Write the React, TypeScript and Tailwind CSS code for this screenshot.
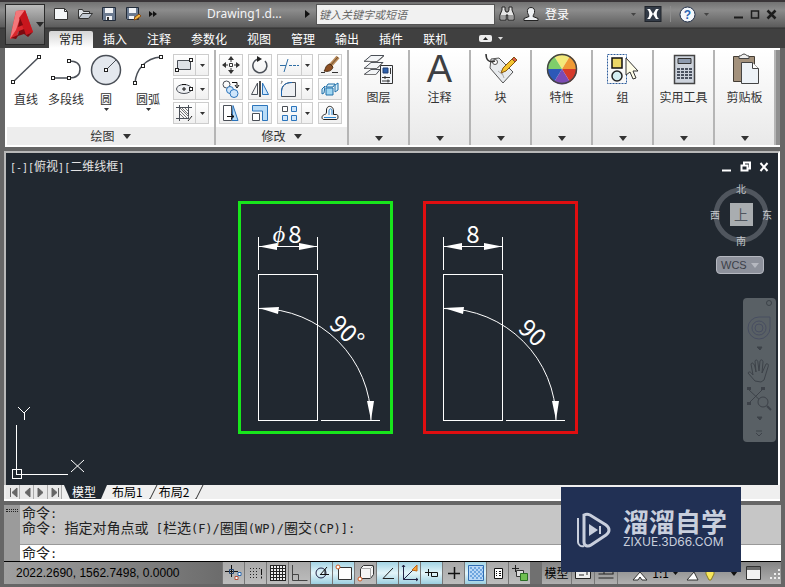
// src/App.tsx
import { Fragment, type ReactNode } from "react";

type IconProps = { w?: number; h?: number; children: ReactNode };

function Icon({ w = 20, h = 20, children }: IconProps) {
  return (
    <svg
      width={w}
      height={h}
      viewBox={`0 0 ${w} ${h}`}
      fill="none"
      stroke="#4a4f57"
      className="shrink-0"
      aria-hidden="true"
    >
      {children}
    </svg>
  );
}

function Caret({ big = false, color = "#333" }: { big?: boolean; color?: string }) {
  return big ? (
    <svg width="8" height="5" viewBox="0 0 8 5" className="shrink-0" aria-hidden="true">
      <path d="M0 0h8L4 5z" fill={color} />
    </svg>
  ) : (
    <svg width="5" height="3" viewBox="0 0 5 3" className="shrink-0" aria-hidden="true">
      <path d="M0 0h5L2.5 3z" fill={color} />
    </svg>
  );
}

// Chinese keeps the surrounding size, ASCII runs get a half-width font
function MixedText({ text, latin }: { text: string; latin: string }) {
  return (
    <>
      {text.split(/([ -~]+)/).map((part, i) =>
        i % 2 ? (
          <span key={i} className={latin}>
            {part}
          </span>
        ) : (
          <Fragment key={i}>{part}</Fragment>
        ),
      )}
    </>
  );
}

// square grip used on the ends of the draw icons
function Grip({ x, y }: { x: number; y: number }) {
  return <rect x={x - 1.5} y={y - 1.5} width="3" height="3" fill="#fff" stroke="#222" />;
}

// ── Title bar ───────────────────────────────────────────────────────────────
const quickTools = [
  {
    name: "New",
    icon: (
      <Icon w={16} h={14}>
        <path d="M1.5 1.5h10l3 3v8h-13z" fill="#f4f6f8" stroke="#333" />
        <path d="M11.5 1.5v3h3" stroke="#333" />
      </Icon>
    ),
  },
  {
    name: "Open",
    icon: (
      <Icon w={16} h={14}>
        <path d="M1.5 11.5v-9h4l1 2h6v2" fill="#dfe3e8" stroke="#333" />
        <path d="M1.5 11.5l4-5h10l-4 5z" fill="#c3cad3" stroke="#333" />
      </Icon>
    ),
  },
  {
    name: "Save",
    icon: (
      <Icon w={16} h={14}>
        <path d="M1.5.5h13v13h-12l-1-1z" fill="#6b7a90" stroke="#222b38" />
        <path d="M4 1h8v5H4zM5 9h6v4H5z" fill="#f2f4f7" stroke="none" />
        <path d="M6 10h2v3H6z" fill="#333" stroke="none" />
      </Icon>
    ),
  },
  {
    name: "Save as",
    icon: (
      <Icon w={16} h={14}>
        <path d="M1.5.5h12v12h-11l-1-1z" fill="#6b7a90" stroke="#222b38" />
        <path d="M4 1h7v5H4zM4 9h5v3H4z" fill="#f2f4f7" stroke="none" />
        <path d="M9 13l1-3 4-3 2 2-4 3z" fill="#f5b942" stroke="#8a4c12" />
      </Icon>
    ),
  },
];

function TitleBar() {
  return (
    <div className="flex h-7 items-center pl-1 text-[13px] text-gray-100">
      <div className="flex w-[154px] shrink-0 items-center gap-2">
        {quickTools.map((t) => (
          <button key={t.name} aria-label={t.name}>
            {t.icon}
          </button>
        ))}
        <button aria-label="More tools">
          <Icon w={8} h={6}>
            <path d="M0 0l4 3-4 3zM4 0l4 3-4 3z" fill="#111" stroke="none" />
          </Icon>
        </button>
      </div>
      <h1 className="w-[98px] shrink-0 whitespace-nowrap font-['Noto_Sans'] text-[12px]">
        Drawing1.d...
      </h1>
      <Icon w={5} h={8}>
        <path d="M0 0l5 4-5 4z" fill="#111" stroke="none" />
      </Icon>
      <input
        aria-label="搜索"
        placeholder="键入关键字或短语"
        className="ml-1.5 h-[21px] w-[179px] border border-[#555] bg-[#f1f1f1] px-0.5 text-[11px] italic text-black outline-none placeholder:text-[#666]"
      />
      <button aria-label="Find" className="ml-1">
        <Icon w={16} h={16}>
          <path d="M3 1h3v3l1 2h2l1-2V1h3v3l2 5v5H9V9H7v5H1V9l2-5z" fill="#e6e6e6" stroke="#222" />
          <path d="M3 9v4M5 9v4M11 9v4M13 9v4" stroke="#555" />
        </Icon>
      </button>
      <button className="ml-2 flex items-center gap-1.5 text-[12px] text-white">
        <Icon w={16} h={16}>
          <path
            d="M8 1.5c3 0 4 2 3.500 5-.5 2-1.500 3-1.500 4l5 2v2H1v-2l5-2c0-1-1-2-1.500-4C4 3.500 5 1.500 8 1.500z"
            fill="#eef0f3"
            stroke="#222"
          />
        </Icon>
        登录
      </button>
      <div className="ml-auto flex items-center pr-1">
        <Caret color="#444" />
        <button aria-label="Exchange" className="ml-2">
          <Icon w={18} h={16}>
            <rect x="1" y=".5" width="16" height="15" fill="#333b47" stroke="#20242b" />
            <path d="M3 3h3l3 5-3 5H3c3-2 3-8 0-10zM15 3h-3L9 8l3 5h3c-3-2-3-8 0-10z" fill="#fff" stroke="none" />
          </Icon>
        </button>
        <span className="mx-2 h-4 w-px bg-[#8d8d8d]" />
        <button aria-label="Help" className="flex items-center gap-2">
          <svg width="17" height="17" viewBox="0 0 17 17" aria-hidden="true">
            <circle cx="8.500" cy="8.500" r="7.500" fill="#f4f7fb" stroke="#25324a" />
            <text
              x="8.500"
              y="13"
              textAnchor="middle"
              className="fill-[#2864b4] font-['Liberation_Sans'] text-[12px] font-bold"
            >
              ?
            </text>
          </svg>
          <Caret color="#444" />
        </button>
        <div className="ml-6 flex items-center gap-1.5">
          <button aria-label="Minimize">
            <Icon w={11} h={11}>
              <path d="M1 8.500h9" stroke="#1d1d1d" strokeWidth="2" />
            </Icon>
          </button>
          <button aria-label="Maximize">
            <Icon w={10} h={11}>
              <path d="M1.500 2h7v7h-7z" stroke="#1d1d1d" strokeWidth="1.500" />
            </Icon>
          </button>
          <button aria-label="Close">
            <Icon w={11} h={11}>
              <path d="M1.500 1.500l8 8M9.500 1.500l-8 8" stroke="#1d1d1d" strokeWidth="2.500" />
            </Icon>
          </button>
        </div>
      </div>
    </div>
  );
}

const ribbonTabs = ["常用", "插入", "注释", "参数化", "视图", "管理", "输出", "插件", "联机"];

function Header() {
  return (
    <header className="flex border-t-2 border-[#3a3538] bg-[linear-gradient(#727272_0px,#8c8c8c_8px,#5c5c5c_25px,#303030_26px,#404040_27px)] px-1">
      <button
        aria-label="Application menu"
        className="mt-0.5 ml-px flex h-[41px] w-10 shrink-0 items-center gap-0.5 border border-[#2b2b2b] bg-linear-to-b from-[#bdbdbd] via-[#858585] to-[#606060] pl-0.5"
      >
        <Icon w={26} h={34}>
          <path d="M8 3l9-1 8 22-7 3-2-5-6 2-1 5-7 2z" fill="#d9262c" stroke="none" />
          <path d="M8 3l9-1-6 11-3 9-6 9z" fill="#f4777a" stroke="none" />
          <path d="M17 2l8 22-7 3-7-17z" fill="#c8161d" stroke="none" />
          <path d="M12 10l3 7-5 2z" fill="#7c0a10" stroke="none" />
          <path d="M3 30l7-3 1-4 5-2 2 6 7-3-5 5-4-3-6 2-2 3z" fill="#7c0a10" stroke="none" />
        </Icon>
        <Caret big color="#2b2b2b" />
      </button>
      <div className="flex min-w-0 flex-1 flex-col">
        <div className="-mt-0.5 pl-1">
          <TitleBar />
        </div>
        <nav className="flex h-5 items-end pl-1">
          {ribbonTabs.map((tab, i) => (
            <button
              key={tab}
              className={`px-2.5 pb-px text-[12px] leading-4 ${
                i === 0
                  ? "rounded-t-xs bg-linear-to-b from-[#d5d5d5] to-white text-[#222]"
                  : "text-white"
              }`}
            >
              {tab}
            </button>
          ))}
          <button aria-label="Minimize ribbon" className="mb-1.5 ml-5.5 flex items-center gap-1.5">
            <Icon w={13} h={7}>
              <rect width="13" height="7" rx="2" fill="#ececec" stroke="none" />
              <path d="M4 5h5L6.500 2z" fill="#222" stroke="none" />
            </Icon>
            <Caret color="#ddd" />
          </button>
        </nav>
      </div>
    </header>
  );
}

// ── Ribbon ──────────────────────────────────────────────────────────────────
const drawTools = [
  {
    name: "直线",
    width: "w-[38px]",
    caret: false,
    icon: (
      <Icon w={32} h={32}>
        <path d="M3 28L29 3" strokeWidth="1.500" />
        <Grip x={3} y={28} />
        <Grip x={29} y={3} />
      </Icon>
    ),
  },
  {
    name: "多段线",
    width: "w-[42px]",
    caret: false,
    icon: (
      <Icon w={32} h={32}>
        <path d="M3 24h16c6 0 11-2 11-9 0-6-4-8-11-8" strokeWidth="1.500" />
        <Grip x={3} y={24} />
        <Grip x={19} y={24} />
        <Grip x={19} y={7} />
      </Icon>
    ),
  },
  {
    name: "圆",
    width: "w-[38px]",
    caret: true,
    icon: (
      <Icon w={32} h={32}>
        <circle cx="16" cy="16" r="14.500" fill="#e4e8ee" strokeWidth="1.500" />
        <path d="M16 16L26 6" />
        <Grip x={16} y={16} />
      </Icon>
    ),
  },
  {
    name: "圆弧",
    width: "w-[46px]",
    caret: true,
    icon: (
      <Icon w={32} h={32}>
        <path d="M3 29C4 16 13 4 29 3" strokeWidth="1.500" />
        <Grip x={3} y={29} />
        <Grip x={11} y={12} />
        <Grip x={29} y={3} />
      </Icon>
    ),
  },
];

const shapeTools = [
  {
    name: "矩形",
    icon: (
      <Icon>
        <path d="M3.500 5.500h13v9h-13z" fill="#dde1e7" />
        <Grip x={3} y={15} />
        <Grip x={17} y={5} />
      </Icon>
    ),
  },
  {
    name: "椭圆",
    icon: (
      <Icon>
        <ellipse cx="10" cy="10" rx="7.500" ry="4.500" fill="#eef0f3" />
        <path d="M10 8v4M8 10h4" stroke="#111" />
        <Grip x={17} y={10} />
        <path d="M8 5.500h4" stroke="#111" />
      </Icon>
    ),
  },
  {
    name: "图案填充",
    icon: (
      <Icon>
        <path d="M5.500 2v16M14.500 2v14M2 4.500h16M2 15.500h13" />
        <path d="M6 8l7 7M6 11l4 4M8 5l6 6M11 5l3 3M6 5l9 9" stroke="#777" />
        <path d="M14 18l4-5" stroke="#222" />
      </Icon>
    ),
  },
];

type Tool = { name: string; icon: ReactNode; caret?: boolean };

const modifyRows: Tool[][] = [
  [
    {
      name: "移动",
      icon: (
        <Icon>
          <path d="M10 2v5M10 13v5M2 10h5M13 10h5" stroke="#333" />
          <path d="M10 1l3 4H7zM10 19l3-4H7zM1 10l4-3v6zM19 10l-4-3v6z" fill="#333" stroke="none" />
          <path d="M8.500 8.500h3v3h-3z" fill="#fff" stroke="#333" />
        </Icon>
      ),
    },
    {
      name: "旋转",
      icon: (
        <Icon>
          <path d="M8 4a7 7 0 1 0 7 2" strokeWidth="1.500" />
          <path d="M7 1l5 3-5 3z" fill="#222" stroke="none" />
        </Icon>
      ),
    },
    {
      name: "修剪",
      caret: true,
      icon: (
        <Icon w={22}>
          <path d="M2 10.500h6M10 4L6 17" stroke="#2f6ea5" />
          <path d="M11 10.500h10" stroke="#2f6ea5" strokeDasharray="3 1" />
        </Icon>
      ),
    },
    {
      name: "删除",
      icon: (
        <Icon>
          <path d="M18 2l-8 9" stroke="#b78857" strokeWidth="4" />
          <path d="M18 2l-8 9" stroke="#6e4a2a" strokeWidth="1" />
          <path d="M10 9l3 3c-1 4-5 5-9 4 2-2 1-6 6-7z" fill="#8d4f23" stroke="#4c2c12" />
          <path d="M1 17.500h4M12 17.500h6" stroke="#333" />
        </Icon>
      ),
    },
  ],
  [
    {
      name: "复制",
      icon: (
        <Icon>
          <circle cx="5.500" cy="5.500" r="3.500" />
          <circle cx="9" cy="11" r="3.500" fill="#cfe6fb" stroke="#2b74bb" />
          <circle cx="13" cy="14.500" r="4" fill="#cfe6fb" stroke="#2b74bb" />
          <path d="M11 3.500h5v4M14 6l2 3 2-3" stroke="#111" />
        </Icon>
      ),
    },
    {
      name: "镜像",
      icon: (
        <Icon>
          <path d="M7.500 4v11.500h-6z" />
          <path d="M12.500 4v11.500h6z" fill="#cfe6fb" stroke="#2b74bb" />
          <path d="M10 2v16" stroke="#111" strokeWidth="1.500" />
        </Icon>
      ),
    },
    {
      name: "圆角",
      caret: true,
      icon: (
        <Icon w={22}>
          <path d="M3.500 17.500V12C4 6 8 3.500 14 3.500h3.500v14z" fill="#eef0f3" />
          <path d="M3.500 17V12C4 6 8 3.500 14 3.500" stroke="#1f69b5" />
          <path d="M3 2l2 1M3 5l1-3" stroke="#999" />
        </Icon>
      ),
    },
    {
      name: "分解",
      icon: (
        <Icon>
          <path d="M6 9h7v7H6z" fill="#9fd6f2" stroke="#1f6fa8" />
          <path d="M8 5h7l-2 3H6zM15 6l3-2v7l-3 2zM5 7L2 10v5l2-1z" fill="#d9f0fb" stroke="#1f6fa8" />
        </Icon>
      ),
    },
  ],
  [
    {
      name: "拉伸",
      icon: (
        <Icon>
          <path d="M12 2.500l5 15h-6z" fill="#b9dcf7" stroke="#2b74bb" />
          <path d="M2.500 2.500h8v15h-8z" fill="#fff" />
          <path d="M6 13.500h7M10 11l3 2.500-3 2.500" stroke="#111" />
        </Icon>
      ),
    },
    {
      name: "缩放",
      icon: (
        <Icon>
          <path d="M2.500 2.500h15v15h-5V8h-10z" fill="#b9dcf7" stroke="#2b74bb" />
          <path d="M2.500 10.500h7v7h-7z" fill="#fff" />
        </Icon>
      ),
    },
    {
      name: "阵列",
      caret: true,
      icon: (
        <Icon w={22}>
          <path d="M4.500 3.500h5v5h-5z" fill="#fff" />
          <path
            d="M13.500 3.500h5v5h-5zM4.500 12.500h5v5h-5zM13.500 12.500h5v5h-5z"
            fill="#cfe6fb"
            stroke="#2b74bb"
          />
        </Icon>
      ),
    },
    {
      name: "偏移",
      icon: (
        <Icon>
          <path
            d="M3.500 16.500h13c2 0 2-5 0-5h-3V8c0-6-7-6-7-1v2c0 3-2 2-3 3-2 1-2 4 0 4.500z"
            stroke="#222"
          />
          <path d="M4 14.500h12M9 12V8c0-3 3-3 3 0v4" stroke="#2b86d1" />
        </Icon>
      ),
    },
  ],
];

function SmallTool({ name, icon, caret }: Tool) {
  return (
    <button
      aria-label={name}
      className={`flex h-[22px] items-center justify-center border border-[#cdcdcd] bg-linear-to-b from-white to-[#f0f0f0] ${
        caret ? "w-9" : "w-6"
      }`}
    >
      {icon}
      {caret && (
        <span className="ml-px flex h-full flex-1 items-center justify-center border-l border-[#cdcdcd]">
          <Caret />
        </span>
      )}
    </button>
  );
}

function PanelFooter({ title }: { title: string }) {
  return (
    <button className="flex h-[18px] w-full shrink-0 items-center justify-center gap-2 bg-[#ededed] text-[12px] leading-none">
      {title}
      <Caret big />
    </button>
  );
}

const keypad = [0, 1, 2, 3];

const bigPanels: Tool[] = [
  {
    name: "图层",
    icon: (
      <Icon w={34} h={32}>
        <path d="M9 2.500h13l-7 6H2zM9 9.500h12l-6 6H2zM9 16.500h9l-4 5H2z" fill="#f3f5f7" />
        <path d="M2 8l13 1 7-6M2 15l12 1 6-6M2 21.500h12" stroke="#777" />
        <path d="M18.500 12.500h12v18h-12z" fill="#f2f5fa" stroke="#333" />
        <path d="M21 15h5v5h-5z" fill="#2d60ad" stroke="#1c3f74" />
        <path d="M28.500 15v6M20 24.500h8M20 28h8M23 23v3M26 26.500v3" stroke="#333" />
      </Icon>
    ),
  },
  {
    name: "注释",
    icon: (
      <span className="h-8 font-['Liberation_Sans'] text-[38px] leading-8 text-[#3d3f43]">A</span>
    ),
  },
  {
    name: "块",
    icon: (
      <Icon w={34} h={32}>
        <path d="M7 6l8-1 14 14-10 11L6 15z" fill="#e8ebee" stroke="#555" />
        <circle cx="11" cy="9" r="2.500" fill="#fff" stroke="#555" />
        <path d="M2 1c0 6 3 9 9 7" stroke="#333" strokeWidth="1.500" />
        <path d="M17 17l3 8M14 18l5 4" stroke="#aaa" />
        <path d="M17 20l2-5L29 5l3 3-10 10z" fill="#f4c430" stroke="#85560f" />
        <path d="M28 6l2-2 3 3-2 2z" fill="#de5a4a" stroke="#85560f" />
      </Icon>
    ),
  },
  {
    name: "特性",
    icon: (
      <Icon w={34} h={32}>
        <g stroke="none">
          <path d="M17 16L9 3a15 15 0 0 1 16 0z" fill="#f3ea7a" />
          <path d="M17 16l8-13a15 15 0 0 1 7 13z" fill="#f09a35" />
          <path d="M17 16h15a15 15 0 0 1-7 13z" fill="#d63a2b" />
          <path d="M17 16l8 13a15 15 0 0 1-16 0z" fill="#7c4bb5" />
          <path d="M17 16L9 29a15 15 0 0 1-7-13z" fill="#2c59b8" />
          <path d="M17 16H2A15 15 0 0 1 9 3z" fill="#7fce6a" />
        </g>
        <circle cx="17" cy="16" r="14.500" stroke="#444" strokeWidth="1.500" />
      </Icon>
    ),
  },
  {
    name: "组",
    icon: (
      <Icon w={34} h={32}>
        <path d="M1.500 1.500h19v29h-19z" stroke="#2d5d9c" strokeDasharray="2 1" />
        <path d="M6 5h10v10H6z" fill="#ecd766" stroke="#111" strokeWidth="1.500" />
        <circle cx="11" cy="23" r="5" fill="#d5eef2" stroke="#222" strokeWidth="1.500" />
        <path d="M20 5v17l4-3 3 7 3-1-3-7h5z" fill="#fffde8" stroke="#333" />
      </Icon>
    ),
  },
  {
    name: "实用工具",
    icon: (
      <Icon w={34} h={32}>
        <path d="M7.500 2.500h20v28h-20z" fill="#cdd3dc" stroke="#444" strokeWidth="1.500" />
        <path d="M11 5.500h13v5H11z" fill="#8d9aae" stroke="#333" />
        {keypad.map((r) =>
          keypad.map((c) => (
            <rect
              key={`${r}-${c}`}
              x={10 + c * 4}
              y={15 + r * 3}
              width="3"
              height="2"
              fill="#4a5260"
              stroke="none"
            />
          )),
        )}
      </Icon>
    ),
  },
  {
    name: "剪贴板",
    icon: (
      <Icon w={34} h={32}>
        <path d="M5.500 3.500h21v25h-21z" fill="#a3917c" stroke="#443d34" />
        <path d="M11 5.500V3c3 0 3-2 5-2s2 2 5 2v2.500z" fill="#f0f0f0" stroke="#444" />
        <path d="M13.500 9.500h11l6 6v15h-17z" fill="#edf2f7" stroke="#444" />
        <path d="M24.500 9.500v6h6" fill="#fff" stroke="#444" />
      </Icon>
    ),
  },
];

function Ribbon() {
  return (
    <section className="mx-[5px] flex h-[99px] border-y-2 border-white bg-white text-[12px] text-[#333]">
      <div className="flex w-[211px] shrink-0 flex-col border-r-2 border-[#b5b5b5] pl-0.5">
        <div className="flex flex-1 pt-1">
          {drawTools.map((t) => (
            <button key={t.name} className={`flex shrink-0 flex-col items-center ${t.width}`}>
              {t.icon}
              <span className="mt-1 whitespace-nowrap leading-[18px]">{t.name}</span>
              {t.caret && <Caret />}
            </button>
          ))}
          <div className="ml-0.5 flex flex-col gap-0.5">
            {shapeTools.map((t) => (
              <SmallTool key={t.name} name={t.name} icon={t.icon} caret />
            ))}
          </div>
        </div>
        <PanelFooter title="绘图" />
      </div>
      <div className="flex w-[133px] shrink-0 flex-col border-r-2 border-[#b5b5b5]">
        <div className="flex flex-1 flex-col gap-0.5 pt-1 pl-[3px]">
          {modifyRows.map((row, i) => (
            <div key={i} className="flex gap-[5px]">
              {row.map((t) => (
                <SmallTool key={t.name} {...t} />
              ))}
            </div>
          ))}
        </div>
        <PanelFooter title="修改" />
      </div>
      {bigPanels.map((p) => (
        <button
          key={p.name}
          className="flex min-w-0 flex-1 flex-col items-center border-r-2 border-[#b5b5b5] bg-linear-to-b from-white to-[#e9e9e9] pt-[3px] pb-1"
        >
          {p.icon}
          <span className="mt-1 whitespace-nowrap leading-4">{p.name}</span>
          <span className="mt-auto">
            <Caret big />
          </span>
        </button>
      ))}
      <div className="w-1 bg-[#8f8f8f]" />
    </section>
  );
}

// ── Drawing area ────────────────────────────────────────────────────────────
type FigureProps = { border: string; diameter?: boolean };

function Figure({ border, diameter = false }: FigureProps) {
  return (
    <div className={`h-[233px] w-[155px] shrink-0 border-3 ${border}`}>
      <svg width="149" height="227" viewBox="0 0 149 227" fill="none" stroke="#fff">
        <g shapeRendering="crispEdges">
          <path d="M17.500 33v33M76.500 33v33M18 42.500h58" />
          <path d="M17.500 70.500h59v146h-59zM80 216.500h59" />
        </g>
        <path d="M18 104.500a112 112 0 0 1 112 112" />
        <g fill="#fff" stroke="none">
          <path d="M18 42.500l18-3.500v7zM76 42.500l-18-3.500v7z" />
          <path d="M18 104l20-1-1 7zM130 216l-4-19h7z" />
        </g>
        <g className="fill-white font-['Noto_Sans_CJK_SC'] text-[24px] font-normal" stroke="none">
          {diameter ? (
            <>
              <text x="38" y="38" textAnchor="middle" fontStyle="italic">
                ϕ
              </text>
              <text x="54" y="39" textAnchor="middle">
                8
              </text>
            </>
          ) : (
            <text x="47" y="39" textAnchor="middle">
              8
            </text>
          )}
          {diameter ? (
            <text transform="translate(87 122) rotate(43)">90°</text>
          ) : (
            <text transform="translate(91 126) rotate(43)">90</text>
          )}
        </g>
      </svg>
    </div>
  );
}

function UcsIcon() {
  return (
    <svg width="78" height="76" viewBox="0 0 78 76" fill="none" stroke="#fff" aria-hidden="true">
      <path d="M9.500 20v50M10 69.500h51M5.500 64.500h9v9h-9z" shapeRendering="crispEdges" />
      <path d="M11 2l6 6 6-6M17.500 8v7M64 55l13 12M77 55L64 67" />
    </svg>
  );
}

function ViewCube() {
  return (
    <svg
      width="66"
      height="66"
      viewBox="0 0 66 66"
      className="fill-[#c3c7cb] font-['Noto_Sans_CJK_SC'] text-[10px]"
      textAnchor="middle"
    >
      <circle cx="33" cy="33" r="25" fill="none" stroke="#50565e" strokeWidth="5" />
      <rect x="22" y="21" width="23" height="23" fill="#a9adb0" />
      <text x="33" y="38" className="fill-[#50565e] text-[14px]">
        上
      </text>
      <text x="33" y="11">北</text>
      <text x="33" y="63">南</text>
      <text x="7" y="37">西</text>
      <text x="59" y="37">东</text>
    </svg>
  );
}

function NavBar() {
  return (
    <svg width="33" height="144" viewBox="0 0 33 144" fill="none" stroke="#3d4249" className="rounded-sm bg-[#596065]">
      <circle cx="26" cy="5" r="2.500" />
      <path d="M16 19h11v11a11 11 0 1 1-11-11z" stroke="#484e61" />
      <circle cx="16" cy="30" r="7" stroke="#484e61" />
      <circle cx="16" cy="30" r="4" stroke="#484e61" />
      <path d="M14 49h5l-2 3z" fill="#3d4249" />
      <path d="M12 83L5 75c1-2 3-1 5 2L8 66c1-2 3-1 4 3l1 5-1-11c1-2 3-1 3 2l1 8 1-10c1-2 3-1 3 1l-1 11 4-9c2-1 3 1 2 3l-4 13-3 2z" />
      <path d="M5 91l16 15M20 91L5 106" />
      <circle cx="20" cy="104" r="5" fill="#596065" />
      <path d="M24 108l4 4" strokeWidth="2" />
      <path d="M4 89h4v3H4zM18 89h4v3h-4zM4 104h4v3H4z" fill="#3d4249" stroke="none" />
      <path d="M14 119h5l-2 3z" fill="#3d4249" />
      <path d="M13 133h6M13 135l3 3 3-3" />
    </svg>
  );
}

function Canvas() {
  return (
    <main className="mt-1 mr-[5px] ml-1 flex min-h-[333px] flex-1 border-2 border-b-0 border-[#b8b8b8] border-r-white bg-[#212830]">
      <div className="flex w-[232px] shrink-0 flex-col justify-between">
        <p className="pt-1 pl-1 text-[12px] leading-[18px] text-[#e3e3e3]">
          <MixedText text="[-][俯视][二维线框]" latin="font-['DejaVu_Sans_Mono'] text-[10px]" />
        </p>
        <div className="pb-1 pl-px">
          <UcsIcon />
        </div>
      </div>
      <div className="flex gap-[30px] pt-[48px]">
        <Figure border="border-[#18e61c]" diameter />
        <Figure border="border-[#e00e10]" />
      </div>
      <div className="ml-auto flex flex-col items-end pt-2 pr-0.5">
        <div className="flex gap-2 pr-1.5 text-white">
          {["M1 9.500h9", "M1.500 4.500h6v5h-6zM4 4V1.500h6v6H8", "M1.500 2l7 8M8.500 2l-7 8"].map((d) => (
            <button key={d} aria-label="Viewport control">
              <Icon w={11} h={12}>
                <path d={d} stroke="#fff" strokeWidth="2" />
              </Icon>
            </button>
          ))}
        </div>
        <div className="mt-[9px] pr-0.5">
          <ViewCube />
        </div>
        <button className="mt-2 mr-3 flex h-[18px] w-12 items-center justify-between rounded-sm border border-[#b5b8c0] bg-[#8d919b] px-1 font-['Liberation_Sans'] text-[11px] text-[#3c4048]">
          WCS
          <Caret big color="#b5b8c0" />
        </button>
        <div className="mt-6">
          <NavBar />
        </div>
      </div>
    </main>
  );
}

// ── Layout tabs ─────────────────────────────────────────────────────────────
const arrows = [
  "M4.500 3v9M11 3v9L6 7.500z",
  "M10 3v9L5 7.500z",
  "M4 3v9l5-4.500z",
  "M4 3v9l5-4.500zM10.500 3v9",
];

function Slash() {
  return (
    <Icon w={9} h={14}>
      <path d="M0 14h1L8 0" stroke="#333" />
    </Icon>
  );
}

function LayoutTabs() {
  return (
    <div className="mr-[5px] ml-1 flex h-4 shrink-0 items-start border-b-2 border-white bg-[#efefef] pl-0.5 text-[12px] leading-[14px] text-black">
      {arrows.map((d) => (
        <button key={d} aria-label="Scroll tabs" className="border-r border-[#aaa] bg-[#e8e8e8]">
          <Icon w={13} h={14}>
            <path d={d} fill="#666" stroke="#666" />
          </Icon>
        </button>
      ))}
      <Icon w={10} h={14}>
        <path d="M2 0h8v14H8z" fill="#212830" stroke="none" />
      </Icon>
      <button className="bg-[#212830] text-white">模型</button>
      <Icon w={12} h={14}>
        <path d="M0 0h11L5 14H0z" fill="#212830" stroke="none" />
      </Icon>
      <button className="ml-1">布局1</button>
      <span className="ml-1.5">
        <Slash />
      </span>
      <button className="ml-px">布局2</button>
      <span className="ml-1.5">
        <Slash />
      </span>
    </div>
  );
}

// ── Command line ────────────────────────────────────────────────────────────
const latinCommand = "whitespace-pre font-['DejaVu_Sans_Mono'] text-[12px]";

function CommandLine() {
  return (
    <section className="mx-1 mt-1 flex shrink-0 border-b border-black bg-white text-[14px] leading-[15px] text-[#222]">
      <div className="w-4 bg-[#9b9b9b] pt-1 pl-0.5">
        <div className="h-[3px] w-3 border-y border-dotted border-[#222]" />
      </div>
      <div className="flex-1">
        <div className="h-10 border-b border-[#999] bg-[#c6c6c6] pl-0.5">
          <p className="h-[15px]">
            <MixedText text="命令:" latin={latinCommand} />
          </p>
          <p className="h-[15px]">
            <MixedText text="命令: 指定对角点或 [栏选(F)/圈围(WP)/圈交(CP)]:" latin={latinCommand} />
          </p>
        </div>
        <label className="flex h-4 items-center pl-0.5">
          <span>
            <MixedText text="命令:" latin={latinCommand} />
          </span>
          <input className="min-w-0 flex-1 bg-transparent outline-none" />
        </label>
      </div>
    </section>
  );
}

// ── Status bar ──────────────────────────────────────────────────────────────
type Toggle = { name: string; on?: boolean; art: ReactNode };

const toggles: Toggle[] = [
  {
    name: "推断约束",
    art: (
      <>
        <path d="M1 8.500h13M7.500 2v12" stroke="#111" />
        <path d="M5.500 6.500h4v4h-4z" stroke="#27466f" />
        <path d="M11 13.500h3v3h-3z" fill="#fff" stroke="#b8513a" />
        <path d="M14 9.500h3v3h-3z" fill="#fff" stroke="#2d68ad" />
      </>
    ),
  },
  {
    name: "捕捉",
    art: (
      <>
        <path d="M4 5.500h11M4 8.500h9M4 11.500h9M4 14.500h9" stroke="#222" strokeDasharray="1 2" />
        <path d="M15.500 6v6M15.500 13.500v2" stroke="#111" />
      </>
    ),
  },
  {
    name: "栅格",
    art: (
      <>
        <path d="M2 2h15v15H2z" fill="#eee" stroke="none" />
        <path
          d="M2.500 2v15M5.500 2v15M8.500 2v15M11.500 2v15M14.500 2v15M17.500 2v15M2 2.500h16M2 5.500h16M2 8.500h16M2 11.500h16M2 14.500h16M2 17.500h16"
          stroke="#222"
        />
      </>
    ),
  },
  { name: "正交", art: <path d="M2.500 2v15.500h15M2.500 11.500h6v6" stroke="#444" /> },
  {
    name: "极轴",
    on: true,
    art: (
      <>
        <circle cx="9" cy="10" r="5" stroke="#224" />
        <path d="M8 12L15 4M8 11.500h9M13 6v5" stroke="#111" />
      </>
    ),
  },
  {
    name: "对象捕捉",
    on: true,
    art: (
      <>
        <path d="M4.500 4.500h13v12h-13z" fill="#fdfdfd" stroke="#333" />
        <circle cx="4" cy="4" r="2" fill="#fff" stroke="#d05a22" />
      </>
    ),
  },
  {
    name: "三维对象捕捉",
    art: (
      <>
        <path d="M4.500 5.500l3-3h10v9l-3 4h-10z" fill="#f5f5f5" stroke="#333" />
        <path d="M4.500 5.500h10l3-3M14.500 5.500v10" stroke="#aaa" />
        <circle cx="4" cy="16" r="2" fill="#fff" stroke="#d05a22" />
      </>
    ),
  },
  { name: "对象追踪", on: true, art: <path d="M15 5L5 15.500h11" stroke="#222" /> },
  {
    name: "动态 UCS",
    on: true,
    art: (
      <>
        <path d="M3.500 2v14.500H18M3.500 16.500l11-11M2 4l1.500-2L5 4M16 15l2 1.500-2 1.500" stroke="#224" />
        <path d="M12 7l5-5v6z" fill="#f7a43a" stroke="#c06414" />
      </>
    ),
  },
  { name: "动态输入", on: true, art: <path d="M3 9.500h7M6.500 6v7M9.500 9.500h6v4h-6z" stroke="#111" /> },
  {
    name: "线宽",
    art: (
      <>
        <path d="M4 10.500h12" stroke="#111" strokeWidth="1.500" />
        <path d="M10.500 4v12" stroke="#111" strokeWidth="1.500" />
      </>
    ),
  },
  {
    name: "透明度",
    on: true,
    art: (
      <>
        <path d="M2.500 2.500h15v15h-15z" fill="#b9d8f6" stroke="#2f6cb2" />
        <path
          d="M4 5h13M4 9h13M4 13h13M6 7h11M6 11h11M6 15h11"
          stroke="#6ea6df"
          strokeWidth="2"
          strokeDasharray="2 2"
        />
      </>
    ),
  },
  {
    name: "快捷特性",
    art: (
      <>
        <path d="M6.500 5.500h8v10h-8z" fill="#fff" stroke="#111" />
        <path d="M8 8.500h1M8 10.500h1M8 12.500h1M11 8.500h2M11 10.500h2M11 12.500h2" stroke="#111" />
      </>
    ),
  },
  {
    name: "选择循环",
    art: (
      <>
        <path d="M2 5.500h7M5.500 2v7" stroke="#222" />
        <path d="M6.500 7.500h7v6h-7z" fill="#ddd" stroke="#333" />
        <path d="M10.500 10.500h7v7h-7z" fill="#6fbf50" stroke="#2b6e24" />
      </>
    ),
  },
];

function StatusBar() {
  return (
    <footer className="mx-1 mb-[3px] flex h-[22px] shrink-0 items-stretch bg-linear-to-b from-[#858585] to-[#b0b0b0] text-[12px] text-black">
      <p className="flex w-[218px] shrink-0 items-center bg-linear-to-r from-[#a0a0a0] to-[#6c6c6c] pl-3 whitespace-nowrap font-['Liberation_Sans']">
        2022.2690, 1562.7498, 0.0000
      </p>
      {toggles.map((t) => (
        <button
          key={t.name}
          aria-label={t.name}
          aria-pressed={!!t.on}
          className={`flex w-[22px] shrink-0 items-center justify-center border-l border-[#777] ${
            t.on
              ? "bg-linear-to-b from-[#a3d3e3] via-[#e3f5fa] to-[#9ccfe0]"
              : "bg-linear-to-b from-[#a9a9a9] to-[#bdbdbd]"
          }`}
        >
          <Icon>{t.art}</Icon>
        </button>
      ))}
      <span className="w-3 shrink-0 bg-[#707070]" />
      <button className="w-[29px] shrink-0 text-[12px]">模型</button>
      <button aria-label="快速查看布局" className="border-l border-[#777] px-px">
        <Icon>
          <path d="M2.500 3.500h15v12h-15z" fill="#eee" stroke="#222" />
          <path d="M6 12h5M8 8h6v4" stroke="#222" />
        </Icon>
      </button>
      <button aria-label="快速查看图形" className="border-x border-[#777] px-px">
        <Icon>
          <path d="M2.500 11h15M2.500 15h15M2 6h6v5M11 6h6v5" stroke="#222" />
        </Icon>
      </button>
      <div className="ml-auto flex items-center gap-2">
        <button className="flex items-center gap-1">
          <Icon w={16}>
            <path d="M1 17l7-8 7 8h-5l-2-3-2 3z" fill="#fff" stroke="#333" />
          </Icon>
          1:1
          <Caret color="#111" />
        </button>
        <button aria-label="注释可见性">
          <Icon w={32}>
            <path d="M1 17l7-8 4 8z" fill="#fff" stroke="#333" />
            <path d="M20 5h8v6l-3 6h-2l-3-6z" fill="#f7e65d" stroke="#8b7c22" />
          </Icon>
        </button>
        <button aria-label="状态栏菜单" className="ml-1">
          <Caret big color="#111" />
        </button>
        <button aria-label="全屏显示">
          <Icon w={15}>
            <path d="M.5 3.500h14v13H.5z" fill="#f3f3f3" stroke="#333" />
            <path d="M1 4h13v3H1z" fill="#6b6b6b" stroke="none" />
          </Icon>
        </button>
        <Icon w={12}>
          <path d="M10 6v2M10 10v2M10 14v2M6 10v2M6 14v2M2 14v2" stroke="#eee" strokeWidth="2" />
        </Icon>
      </div>
    </footer>
  );
}

function Watermark() {
  return (
    <aside className="absolute right-11 bottom-[15px] flex h-[85px] w-[180px] items-center gap-3 bg-[#213054] pl-[15px] text-[#c9cfdd]">
      <svg width="35" height="36" viewBox="0 0 35 36" fill="none" stroke="#c9cfdd" aria-hidden="true">
        <path d="M8 3c2-1 4-1 6 0l16 10c4 3 4 7 0 10L15 33c-3 2-7 1-7-3z" strokeWidth="3" />
        <path d="M2 6v24c0 3 3 5 6 4" strokeWidth="2" />
        <path d="M13 12l9 6-9 6z" fill="#c9cfdd" stroke="none" />
        <path d="M24 14v8" strokeWidth="2" />
      </svg>
      <div className="flex flex-col pb-1">
        <strong className="text-[26px] leading-[28px] font-bold">溜溜自学</strong>
        <span className="font-['Inter'] text-[12px] leading-[14px]">ZIXUE.3D66.COM</span>
      </div>
    </aside>
  );
}

export default function App() {
  return (
    <div className="relative flex min-h-screen flex-col overflow-hidden bg-[#666] font-['Noto_Sans_CJK_SC',sans-serif]">
      <Header />
      <Ribbon />
      <Canvas />
      <LayoutTabs />
      <CommandLine />
      <StatusBar />
      <Watermark />
    </div>
  );
}
